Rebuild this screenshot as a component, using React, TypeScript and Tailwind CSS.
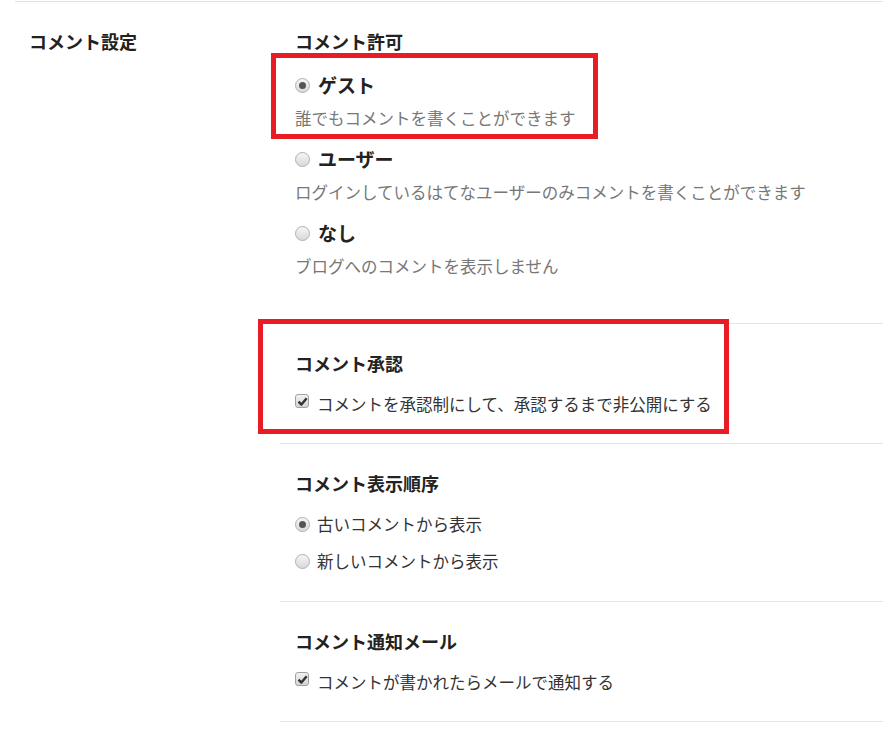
import React from 'react';

function Radio({ checked }: { checked?: boolean }) {
  return (
    <span className="flex h-[15px] w-[15px] shrink-0 items-center justify-center rounded-full border border-[#b0b0b0] bg-linear-to-b from-[#f6f6f6] to-[#d9d9d9]">
      {checked && <span className="h-[7px] w-[7px] rounded-full bg-[#555]" />}
    </span>
  );
}

function Checkbox() {
  return (
    <span className="flex h-[14px] w-[14px] shrink-0 items-center justify-center rounded-[3px] border border-[#a0a0a0] bg-linear-to-b from-[#f2f2f2] to-[#d4d4d4]">
      <svg width="11" height="11" viewBox="0 0 10 10">
        <path d="M1.4 5.2 L4 7.8 L8.8 2" fill="none" stroke="#333" strokeWidth="2.2" strokeLinejoin="round" />
      </svg>
    </span>
  );
}

function Heading({ children }: { children: React.ReactNode }) {
  return <h3 className="text-[18px] font-bold leading-[27px] text-[#222]">{children}</h3>;
}

function Choice({ title, desc, checked }: { title: string; desc: string; checked?: boolean }) {
  return (
    <div>
      <div className="flex h-[28px] items-center gap-[8px]">
        <Radio checked={checked} />
        <span className="text-[19px] font-bold leading-[28px] text-[#222]">{title}</span>
      </div>
      <p className="mt-[7px] text-[16.5px] leading-[24px] text-[#777]">{desc}</p>
    </div>
  );
}

function CheckRow({ label }: { label: string }) {
  return (
    <label className="flex items-start gap-[8px] text-[16.5px] leading-[24px] text-[#333]">
      <span className="mt-[2px]">
        <Checkbox />
      </span>
      {label}
    </label>
  );
}

function RadioRow({ label, checked }: { label: string; checked?: boolean }) {
  return (
    <label className="flex h-[24px] items-center gap-[7px] text-[16.5px] leading-[24px] text-[#333]">
      <Radio checked={checked} />
      {label}
    </label>
  );
}

export default function App() {
  return (
    <div className="min-h-[737px] w-[883px] bg-white font-['Noto_Sans_CJK_JP',sans-serif]">
      <div className="ml-[15px] mt-px flex border-t border-[#e2e2e2]">
        <div className="w-[265px] shrink-0 pl-[14px] pt-[26px]">
          <h2 className="text-[18px] font-bold leading-[27px] text-[#222]">コメント設定</h2>
        </div>

        <div className="flex-1">
          <section className="border-b border-[#e5e5e5] pb-[45px] pl-[15px] pt-[26px]">
            <Heading>コメント許可</Heading>
            <div className="mt-[16px] flex flex-col gap-[15px]">
              <div className="relative">
                <Choice title="ゲスト" desc="誰でもコメントを書くことができます" checked />
                <div className="absolute left-[-24px] top-[-18px] h-[86px] w-[327px] border-[5px] border-[#e81c24]" />
              </div>
              <Choice title="ユーザー" desc="ログインしているはてなユーザーのみコメントを書くことができます" />
              <Choice title="なし" desc="ブログへのコメントを表示しません" />
            </div>
          </section>

          <section className="relative border-b border-[#e5e5e5] pb-[27px] pl-[15px] pt-[26px]">
            <Heading>コメント承認</Heading>
            <div className="mt-[15px]">
              <CheckRow label="コメントを承認制にして、承認するまで非公開にする" />
            </div>
            <div className="absolute left-[-22px] top-[-5px] h-[115px] w-[471px] border-[5px] border-[#e81c24]" />
          </section>

          <section className="border-b border-[#e5e5e5] pb-[28px] pl-[15px] pt-[26px]">
            <Heading>コメント表示順序</Heading>
            <div className="mt-[15px] flex flex-col gap-[13px]">
              <RadioRow label="古いコメントから表示" checked />
              <RadioRow label="新しいコメントから表示" />
            </div>
          </section>

          <section className="border-b border-[#e5e5e5] pb-[27px] pl-[15px] pt-[26px]">
            <Heading>コメント通知メール</Heading>
            <div className="mt-[15px]">
              <CheckRow label="コメントが書かれたらメールで通知する" />
            </div>
          </section>
        </div>
      </div>
    </div>
  );
}
